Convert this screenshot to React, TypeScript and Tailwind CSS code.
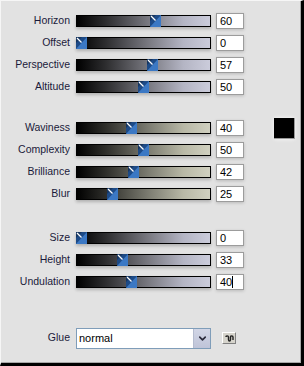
import React from 'react';
import { ChevronDown } from 'lucide-react';

type Row = { label: string; value: number; tone: 'blue' | 'sand' };

const BAR_W = 135;
const THUMB_W = 11;

const groups: Row[][] = [
  [
    { label: 'Horizon', value: 60, tone: 'blue' },
    { label: 'Offset', value: 0, tone: 'blue' },
    { label: 'Perspective', value: 57, tone: 'blue' },
    { label: 'Altitude', value: 50, tone: 'blue' },
  ],
  [
    { label: 'Waviness', value: 40, tone: 'sand' },
    { label: 'Complexity', value: 50, tone: 'sand' },
    { label: 'Brilliance', value: 42, tone: 'sand' },
    { label: 'Blur', value: 25, tone: 'sand' },
  ],
  [
    { label: 'Size', value: 0, tone: 'blue' },
    { label: 'Height', value: 33, tone: 'blue' },
    { label: 'Undulation', value: 40, tone: 'blue' },
  ],
];

const Thumb = () => (
  <svg width="11" height="12" viewBox="0 0 11 12">
    <rect x="0" y="0" width="11" height="12" fill="#1d4a86" />
    <polygon points="11,0 11,12 0,12" fill="#3b78c4" />
    <polygon points="0,0 6,0 0,6" fill="#16355f" />
    <line x1="1" y1="1" x2="5.5" y2="5.5" stroke="#ffffff" strokeWidth="1.2" />
  </svg>
);

const Slider = ({ value, tone }: { value: number; tone: 'blue' | 'sand' }) => {
  const left = Math.round((value / 100) * (BAR_W - THUMB_W));
  return (
    <div
      className={`relative w-[135px] h-[12px] border border-black shadow-[0_2px_3px_rgba(0,0,0,0.22)] ${
        tone === 'blue'
          ? 'bg-[linear-gradient(to_right,#000_0%,#2e2e30_22%,#7c7c84_55%,#b4b5c4_80%,#cbccdb_100%)]'
          : 'bg-[linear-gradient(to_right,#000_0%,#2f2f2b_22%,#7f7f74_55%,#b8b8a6_80%,#d0d0c0_100%)]'
      }`}
    >
      <div className="absolute top-[-1px] h-[12px]" style={{ left: left - 1 }}>
        <Thumb />
      </div>
    </div>
  );
};

const NumBox = ({ value, cursor }: { value: number; cursor?: boolean }) => (
  <div className="w-[28px] h-[16px] bg-white border border-[#9c9c9c] shadow-[0_1px_3px_rgba(0,0,0,0.18)] flex items-center pl-[3px] text-[11px] leading-none text-black">
    {value}
    {cursor && <span className="w-px h-[12px] bg-black" />}
  </div>
);

const SliderRow = ({ row, extra, cursor }: { row: Row; extra?: React.ReactNode; cursor?: boolean }) => (
  <div className="h-[22px] flex items-center">
    <div className="w-[69px] text-right text-[10.5px] text-[#1a1a3a]">{row.label}</div>
    <div className="ml-[6px]">
      <Slider value={row.value} tone={row.tone} />
    </div>
    <div className="ml-[5px]">
      <NumBox value={row.value} cursor={cursor} />
    </div>
    {extra}
  </div>
);

export default function App() {
  return (
    <div className="w-[304px] h-[366px] bg-[#e2e2e2] border-t border-l border-[#f6f6f6] border-r-[3px] border-b-[3px] border-r-black border-b-black font-['Liberation_Sans',Arial,sans-serif]">
      <div className="h-full border-r border-b border-[#a8a8a8] pt-[9px]">
        {groups[0].map((r) => (
          <SliderRow key={r.label} row={r} />
        ))}
        <div className="h-[19px]" />
        {groups[1].map((r, i) => (
          <SliderRow
            key={r.label}
            row={r}
            extra={
              i === 0 ? (
                <div className="ml-[30px] w-[21px] h-[21px] bg-black border-r border-b border-[#9a9a9a] shadow-[0_0_4px_rgba(255,255,255,0.9)]" />
              ) : undefined
            }
          />
        ))}
        <div className="h-[22px]" />
        {groups[2].map((r, i) => (
          <SliderRow key={r.label} row={r} cursor={i === 2} />
        ))}
        <div className="h-[34px]" />
        <div className="h-[22px] flex items-center">
          <div className="w-[69px] text-right text-[10.5px] text-[#1a1a3a]">Glue</div>
          <div className="ml-[6px] w-[135px] h-[21px] bg-white border border-[#7f9db9] flex items-center">
            <span className="flex-1 pl-[2px] text-[11px] text-black">normal</span>
            <div className="w-[17px] h-[19px] bg-[linear-gradient(to_bottom,#d2d6e6,#bfc4d8)] border-l border-[#b5bccf] flex items-center justify-center">
              <ChevronDown size={11} strokeWidth={3.5} color="#2a2a3a" />
            </div>
          </div>
          <div className="ml-[11px] w-[14px] h-[12px] bg-[#d6d4cc] border-t border-l border-white border-r border-b border-r-[#808080] border-b-[#808080] flex items-center justify-center">
            <svg width="9" height="7" viewBox="0 0 9 7">
              <path
                d="M1 2 C1 0.5 3.5 0.5 3.5 2 L3.5 4.5 C3.5 6.5 5.5 6.5 5.5 4.5 L5.5 2 C5.5 0.5 8 0.5 8 2 L8 5"
                fill="none"
                stroke="#222"
                strokeWidth="1.4"
              />
            </svg>
          </div>
        </div>
      </div>
    </div>
  );
}
